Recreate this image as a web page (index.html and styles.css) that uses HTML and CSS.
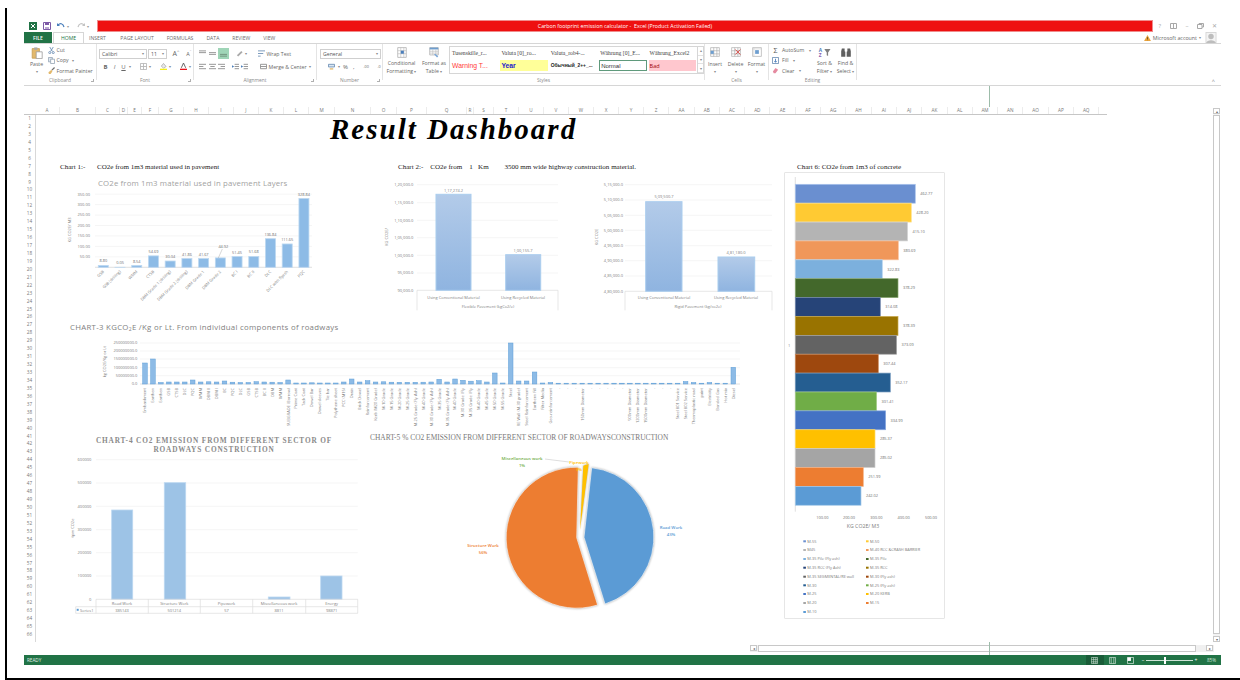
FILE: index.html
```html
<!DOCTYPE html>
<html lang="en">
<head>
<meta charset="utf-8">
<title>Carbon footprint emission calculator - Excel</title>
<link rel="stylesheet" href="styles.css">
</head>
<body>
<svg class="sprite" aria-hidden="true">
  <defs>
    <linearGradient id="barFade" x1="0" y1="0" x2="0" y2="1">
      <stop offset="0" stop-color="#b3cbe9"/>
      <stop offset="1" stop-color="#8fb4e0"/>
    </linearGradient>
    <symbol id="al-top" viewBox="0 0 8 8"><path d="M0 1h8M0 3h8" stroke="#8a8a8a" fill="none"/></symbol>
    <symbol id="al-mid" viewBox="0 0 8 8"><path d="M0 3h8M0 5h8" stroke="#8a8a8a" fill="none"/></symbol>
    <symbol id="al-bot" viewBox="0 0 8 8"><path d="M0 5h8M0 7h8" stroke="#6d8d78" fill="none"/></symbol>
    <symbol id="al-left" viewBox="0 0 8 8"><path d="M0 1.5h8M0 4h5M0 6.5h8" stroke="#8a8a8a" fill="none"/></symbol>
    <symbol id="al-center" viewBox="0 0 8 8"><path d="M0 1.5h8M1.5 4h5M0 6.5h8" stroke="#8a8a8a" fill="none"/></symbol>
    <symbol id="al-right" viewBox="0 0 8 8"><path d="M0 1.5h8M3 4h5M0 6.5h8" stroke="#8a8a8a" fill="none"/></symbol>
    <symbol id="indent" viewBox="0 0 8 8"><path d="M3 1.5h5M3 4h5M3 6.5h5" stroke="#8a8a8a" fill="none"/><path d="M2.5 4 0 2.5v3z" fill="#4a7ebb"/></symbol>
    <symbol id="table-blue" viewBox="0 0 16 18"><path d="M1 1h14v16H1z" fill="#fff" stroke="#9a9a9a"/><path d="M1 6h14M1 11h14M6 1v16M11 1v16" stroke="#b9b9b9"/><path d="M6 6h5v5H6z" fill="#4a7ebb"/></symbol>
  </defs>
</svg>

<div class="frame">
  <div class="window">

    <header class="titlebar">
      <div class="qat">
        <svg class="qat-ic" viewBox="0 0 8 8"><path d="M0 0h8v8H0z" fill="#217346"/><path d="M2 2l4 4M6 2 2 6" stroke="#fff"/></svg>
        <svg class="qat-ic" viewBox="0 0 8 8"><path d="M.5.5h7v7h-7z" fill="#fff" stroke="#7d5aa6"/><path d="M2 1h4v2H2z" fill="#7d5aa6"/><path d="M2 5h4v2H2z" fill="#b9a6d1"/></svg>
        <svg class="qat-ic" viewBox="0 0 8 8"><path d="M1 3c2-2 5-2 6 2" fill="none" stroke="#4a7ebb" stroke-width="1.2"/><path d="M0 1v3h3z" fill="#4a7ebb"/></svg>
        <span class="qat-caret">▾</span>
        <svg class="qat-ic" viewBox="0 0 8 8"><path d="M7 3C5 1 2 1 1 5" fill="none" stroke="#c4c4c4" stroke-width="1.2"/><path d="M8 1v3H5z" fill="#c4c4c4"/></svg>
        <span class="qat-caret">▾</span>
      </div>
      <div class="redbar">Carbon footprint emission calculator -&nbsp; Excel (Product Activation Failed)</div>
      <div class="winbtns">
        <span>?</span>
        <span><svg class="win-ic" viewBox="0 0 7 6"><path d="M.5.5h6v5h-6zM3.5.5v5" fill="none" stroke="#a8a8a8"/></svg></span>
        <span>–</span>
        <span><svg class="win-ic" viewBox="0 0 7 6"><path d="M.5 1.5h4.5v4H.5zM2 1V.5h4.5v3.5H5" fill="none" stroke="#a8a8a8"/></svg></span>
        <span>✕</span>
      </div>
    </header>

    <nav class="tabs">
      <span class="tab tab-file">FILE</span>
      <span class="tab tab-home">HOME</span>
      <span class="tab tab-insert">INSERT</span>
      <span class="tab">PAGE LAYOUT</span>
      <span class="tab">FORMULAS</span>
      <span class="tab">DATA</span>
      <span class="tab">REVIEW</span>
      <span class="tab">VIEW</span>
      <div class="account">
        <svg class="warn" viewBox="0 0 8 7"><path d="M4 0 8 7H0z" fill="#e8a33d"/><path d="M4 2.5v2.2M4 5.3v.7" stroke="#4a3a1a" stroke-width=".8"/></svg>
        <span>Microsoft account</span>
        <span class="caret">▾</span>
        <svg class="avatar" viewBox="0 0 12 12"><path d="M0 0h12v12H0z" fill="#d6d6d6"/><path d="M1 1h10v10H1z" fill="#f4f4f4"/><circle cx="6" cy="5" r="3" fill="#bdbdbd"/><path d="M1 12c0-4 10-4 10 0z" fill="#bdbdbd"/></svg>
      </div>
    </nav>

    <section class="ribbon">
      <div class="group g-clip">
        <div class="g-body clip-body">
          <div class="big-btn paste">
            <svg class="paste-ic" viewBox="0 0 14 15"><path d="M1 2h9v12H1z" fill="#e3b96c" stroke="#c59a4f"/><path d="M3.5 .5h4v3h-4z" fill="#a9a9a9"/><path d="M6 6h7.5v8.5H6z" fill="#fff" stroke="#9a9a9a"/></svg>
            <span>Paste</span>
            <span class="caret">▾</span>
          </div>
          <ul class="clip-list">
            <li><svg class="ic" viewBox="0 0 8 8"><path d="M2 0l3 5M6 0 3 5" stroke="#6d8fb5" fill="none"/><circle cx="2" cy="6.4" r="1.2" fill="none" stroke="#6d8fb5"/><circle cx="6" cy="6.4" r="1.2" fill="none" stroke="#6d8fb5"/></svg>Cut</li>
            <li><svg class="ic" viewBox="0 0 8 8"><path d="M.5.5h4.5v5H.5z" fill="#dfe8f2" stroke="#9aa9b8"/><path d="M3 2.5h4.5v5H3z" fill="#fff" stroke="#9aa9b8"/></svg>Copy <span class="caret">▾</span></li>
            <li><svg class="ic" viewBox="0 0 8 8"><path d="M4 3l3-3 1 1-3 3z" fill="#6f6f6f"/><path d="M.5 6 4 3l1 2-2 3H1z" fill="#e3b96c"/></svg>Format Painter</li>
          </ul>
        </div>
        <div class="g-label">Clipboard<i class="launcher"></i></div>
      </div>

      <div class="group g-font">
        <div class="g-body stack">
          <div class="tool-row">
            <span class="combo combo-font">Calibri<b class="caret">▾</b></span>
            <span class="combo combo-size">11<b class="caret">▾</b></span>
            <span class="glyph glyph-a">A<sup>^</sup></span>
            <span class="glyph glyph-a small-a">A<sup>ˇ</sup></span>
          </div>
          <div class="tool-row row-font">
            <b class="glyph">B</b><i class="glyph">I</i><u class="glyph">U</u><span class="caret">▾</span>
            <svg class="ic ic-gap" viewBox="0 0 8 8"><path d="M.5.5h7v7h-7zM4 .5v7M.5 4h7" fill="none" stroke="#b5b5b5"/></svg><span class="caret">▾</span>
            <svg class="ic ic-gap" viewBox="0 0 8 8"><path d="M4 .5 7 4 4 6 1.5 3.5z" fill="#e9e9e9" stroke="#8a8a8a" stroke-width=".6"/><path d="M0 6.5h8V8H0z" fill="#f4ef1a"/></svg><span class="caret">▾</span>
            <svg class="ic ic-gap" viewBox="0 0 8 8"><path d="M1.5 5.5 4 0l2.5 5.5" fill="none" stroke="#555"/><path d="M0 6.5h8V8H0z" fill="#e8141c"/></svg><span class="caret">▾</span>
          </div>
        </div>
        <div class="g-label">Font<i class="launcher"></i></div>
      </div>

      <div class="group g-align">
        <div class="g-body stack">
          <div class="tool-row">
            <svg class="ic"><use href="#al-top"/></svg>
            <svg class="ic"><use href="#al-mid"/></svg>
            <span class="pressed"><svg class="ic"><use href="#al-bot"/></svg></span>
            <svg class="ic ic-wide" viewBox="0 0 8 8"><path d="M1 6 6 1l1.5 1.5-5 5z" fill="#a9a9a9"/></svg><span class="caret">▾</span>
            <span class="with-icon wrap"><svg class="ic" viewBox="0 0 8 8"><path d="M0 1h8M0 4h6M0 7h3" stroke="#6d8fb5" fill="none"/></svg>Wrap Text</span>
          </div>
          <div class="tool-row">
            <svg class="ic"><use href="#al-left"/></svg>
            <svg class="ic"><use href="#al-center"/></svg>
            <svg class="ic"><use href="#al-right"/></svg>
            <svg class="ic ic-wide"><use href="#indent"/></svg>
            <svg class="ic"><use href="#indent"/></svg>
            <span class="with-icon merge"><svg class="ic" viewBox="0 0 8 8"><path d="M.5 1.5h7v5h-7zM.5 4h7" fill="none" stroke="#8a8a8a"/></svg>Merge &amp; Center <span class="caret">▾</span></span>
          </div>
        </div>
        <div class="g-label">Alignment<i class="launcher"></i></div>
      </div>

      <div class="group g-num">
        <div class="g-body stack">
          <div class="tool-row"><span class="combo combo-num">General<b class="caret">▾</b></span></div>
          <div class="tool-row row-num">
            <svg class="ic" viewBox="0 0 8 8"><path d="M.5 1.5h7v3h-7z" fill="#dbe7f3" stroke="#6d8fb5"/><path d="M2 6h4v1.5H2z" fill="#e3b96c"/></svg><span class="caret">▾</span>
            <span class="glyph">%</span><span class="glyph">,</span>
            <span class="glyph tiny">.00</span><span class="glyph tiny">.0</span>
          </div>
        </div>
        <div class="g-label">Number<i class="launcher"></i></div>
      </div>

      <div class="group g-styles">
        <div class="g-body styles-body">
          <div class="big-btn cond">
            <svg class="big-ic"><use href="#table-blue"/></svg>
            <span>Conditional</span>
            <span>Formatting <b class="caret">▾</b></span>
          </div>
          <div class="big-btn tbl">
            <svg class="big-ic" viewBox="0 0 16 18"><path d="M1 1h14v12H1z" fill="#fff" stroke="#9a9a9a"/><path d="M1 1h14v3H1z" fill="#6d9ecf"/><path d="M1 7h14M1 10h14M6 4v9M11 4v9" stroke="#bcbcbc"/><path d="M8 12l5 5 2-2-5-4z" fill="#7aa6d6"/></svg>
            <span>Format as</span>
            <span>Table <b class="caret">▾</b></span>
          </div>
          <div class="gallery">
            <div class="gal-cells">
              <span class="gal-name">Tusenskille_r...</span>
              <span class="gal-name">Valuta [0]_ro...</span>
              <span class="gal-name">Valuta_rob4-...</span>
              <span class="gal-name">Währung [0]_E...</span>
              <span class="gal-name">Währung_Excel2</span>
              <span class="gal-swatch warn-text">Warning T...</span>
              <span class="gal-swatch year">Year</span>
              <span class="gal-swatch ob">Обычный_2++_...</span>
              <span class="gal-swatch normal">Normal</span>
              <span class="gal-swatch bad">Bad</span>
            </div>
            <div class="gal-arrows"><span>▴</span><span>▾</span><span>▾</span></div>
          </div>
        </div>
        <div class="g-label">Styles</div>
      </div>

      <div class="group g-cells">
        <div class="g-body cells-body">
          <div class="big-btn">
            <svg class="big-ic narrow" viewBox="0 0 16 16"><path d="M1 1h14v14H1zM1 6h14M1 11h14M6 1v14M11 1v14" fill="#fff" stroke="#a5a5a5"/><path d="M1 6h5v5H1z" fill="#6d9ecf"/></svg>
            <span>Insert</span><span class="caret">▾</span>
          </div>
          <div class="big-btn">
            <svg class="big-ic narrow" viewBox="0 0 16 16"><path d="M1 1h14v14H1zM1 6h14M1 11h14M6 1v14M11 1v14" fill="#fff" stroke="#a5a5a5"/><path d="M7 4l8 8M15 4l-8 8" stroke="#d9534f" stroke-width="1.6"/></svg>
            <span>Delete</span><span class="caret">▾</span>
          </div>
          <div class="big-btn">
            <svg class="big-ic narrow" viewBox="0 0 16 16"><path d="M1 1h14v14H1z" fill="#fff" stroke="#a5a5a5"/><path d="M5 5h6v6H5z" fill="#6d9ecf"/><path d="M1 3h14M3 1v14" stroke="#cfcfcf"/></svg>
            <span>Format</span><span class="caret">▾</span>
          </div>
        </div>
        <div class="g-label">Cells</div>
      </div>

      <div class="group g-edit">
        <div class="g-body edit-body">
          <ul class="clip-list edit-list">
            <li><span class="sigma">Σ</span>AutoSum <span class="caret">▾</span></li>
            <li><svg class="ic" viewBox="0 0 8 8"><path d="M.5.5h7v7h-7z" fill="#fff" stroke="#6d8fb5"/><path d="M4 2v4M2.5 4.5 4 6l1.500-1.500" stroke="#4a7ebb" fill="none"/></svg>Fill <span class="caret">▾</span></li>
            <li><svg class="ic" viewBox="0 0 8 8"><path d="M1 5l3-4 3 2-3 4H2z" fill="#e58aa0"/></svg>Clear <span class="caret">▾</span></li>
          </ul>
          <div class="big-btn">
            <svg class="big-ic" viewBox="0 0 18 16"><text class="sort-a" x="0" y="7">A</text><text class="sort-z" x="0" y="15">Z</text><path d="M8 3h9l-3.500 5v5l-2-1V8z" fill="#7f7f7f"/></svg>
            <span>Sort &amp;</span>
            <span>Filter <b class="caret">▾</b></span>
          </div>
          <div class="big-btn">
            <svg class="big-ic" viewBox="0 0 16 16"><path d="M2 2h4v4l1 1v7H1V6zM10 2h4l1 4 0 8H9V7l1-1z" fill="#5f5f5f"/></svg>
            <span>Find &amp;</span>
            <span>Select <b class="caret">▾</b></span>
          </div>
        </div>
        <div class="g-label">Editing</div>
      </div>

      <div class="ribbon-end"><span class="collapse">^</span></div>
    </section>

    <div class="formula-gap"><i class="split-mark"></i></div>

    <section class="sheet">
      <div class="sheet-main">
        <div class="col-heads">
          <span class="corner"></span>
          <div class="col-grid" id="colGrid"></div>
        </div>
        <div class="sheet-body">
          <div class="row-heads" id="rowHeads"></div>
          <main class="dash">
            <div class="dash-left">
              <h1 class="dash-title">Result Dashboard</h1>

              <div class="dash-row row-one">
                <figure class="chart chart-one">
                  <figcaption class="cap"><span class="cap-lead">Chart 1:-</span>CO2e from 1m3 material used in pavement</figcaption>
                  <svg class="c1" id="chartOne" viewBox="60 172 320 150">
                    <text class="ct-gray" x="98" y="185.500">CO2e from 1m3 material used in pavement Layers</text>
                    <text class="tk" transform="rotate(-90 71 230)" x="71" y="230" text-anchor="middle">KG CO2E/ M3</text>
                  </svg>
                </figure>
                <figure class="chart chart-two">
                  <figcaption class="cap cap-two">Chart 2:-    CO2e from    1   Km         3500 mm wide highway construction material.</figcaption>
                  <div class="two-plots">
                    <svg class="c2a" viewBox="380 172 210 150">
                      <g class="grid">
                        <path d="M417 184.700h141M417 202.700h141M417 220.300h141M417 237.700h141M417 255.300h141M417 273h141"/>
                      </g>
                      <path class="frame-line" d="M417 290.300h141M417 290.300v20M558 290.300v20"/>
                      <rect class="gbar" x="436" y="194.300" width="35" height="96"/>
                      <rect class="gbar" x="505.700" y="254.700" width="35" height="35.600"/>
                      <g class="tk tk-end">
                        <text x="413.300" y="186">1,20,000.0</text><text x="413.300" y="204">1,15,000.0</text><text x="413.300" y="221.600">1,10,000.0</text><text x="413.300" y="239">1,05,000.0</text><text x="413.300" y="256.600">1,00,000.0</text><text x="413.300" y="274.300">95,000.0</text><text x="413.300" y="291.600">90,000.0</text>
                      </g>
                      <g class="tk tk-mid">
                        <text x="453.500" y="191.500">1,17,274.2</text>
                        <text x="523" y="251.500">1,00,155.7</text>
                        <text x="453.500" y="298.500">Using Conventional Material</text>
                        <text x="523" y="298.500">Using Recycled Material</text>
                        <text x="488" y="307.500">Flexible Pavement (kgCo2/e)</text>
                        <text transform="rotate(-90 388 237)" x="388" y="237">KG CO2E/</text>
                      </g>
                    </svg>
                    <svg class="c2b" viewBox="590 172 194 150">
                      <g class="grid">
                        <path d="M625 184.700h147M625 200h147M625 215.300h147M625 230.300h147M625 245.700h147M625 260.700h147M625 276h147"/>
                      </g>
                      <path class="frame-line" d="M625 291.300h147M625 291.300v19M772 291.300v19"/>
                      <rect class="gbar" x="645.700" y="201.700" width="36.300" height="89.600"/>
                      <rect class="gbar" x="718" y="257" width="36.700" height="34.300"/>
                      <g class="tk tk-end">
                        <text x="623" y="186">5,15,000.0</text><text x="623" y="201.300">5,10,000.0</text><text x="623" y="216.600">5,05,000.0</text><text x="623" y="231.600">5,00,000.0</text><text x="623" y="247">4,95,000.0</text><text x="623" y="262">4,90,000.0</text><text x="623" y="277.300">4,85,000.0</text><text x="623" y="292.600">4,80,000.0</text>
                      </g>
                      <g class="tk tk-mid">
                        <text x="664" y="198.300">5,09,500.7</text>
                        <text x="736" y="254">4,81,180.0</text>
                        <text x="664" y="298.500">Using Conventional Material</text>
                        <text x="736" y="298.500">Using Recycled Material</text>
                        <text x="698" y="307.500">Rigid Pavement  (kg/co2e)</text>
                        <text transform="rotate(-90 598 237)" x="598" y="237">KG CO2E</text>
                      </g>
                    </svg>
                  </div>
                </figure>
              </div>

              <figure class="chart">
                <svg class="c3" id="chartThree" viewBox="60 322 724 110">
                  <text class="ct-dark" x="70" y="329.500">CHART-3 KGCO<tspan class="sub" dy="1.500">2</tspan><tspan dy="-1.500">E /Kg or Lt. From individual components of roadways</tspan></text>
                </svg>
              </figure>

              <div class="dash-row">
                <figure class="chart">
                  <svg class="c4" viewBox="60 432 305 193">
                    <text class="ct-serif ct-spaced" x="214" y="442.500">CHART-4 CO2 EMISSION FROM DIFFERENT SECTOR OF</text>
                    <text class="ct-serif ct-spaced" x="214" y="451.500">ROADWAYS CONSTRUCTION</text>
                    <path class="grid-line" d="M96 459.700h261.700M96 483h261.700M96 506.300h261.700M96 529.700h261.700M96 552.700h261.700M96 576h261.700"/>
                    <rect class="lbar" x="111.700" y="510" width="21" height="89.300"/>
                    <rect class="lbar" x="164.300" y="482.700" width="21.400" height="116.600"/>
                    <rect class="lbar" x="268.300" y="597" width="21.700" height="2.300"/>
                    <rect class="lbar" x="320.700" y="576" width="21.300" height="23.300"/>
                    <path class="frame-line" d="M96 599.300h261.700v14H75.700v-6.600h282M96 599.300v14M148.300 599.300v14M200.300 599.300v14M252.700 599.300v14M305.700 599.300v14"/>
                    <g class="tk tk-end">
                      <text x="91.300" y="461">600000</text><text x="91.300" y="484.300">500000</text><text x="91.300" y="507.600">400000</text><text x="91.300" y="531">300000</text><text x="91.300" y="554">200000</text><text x="91.300" y="577.300">100000</text><text x="91.300" y="600.600">0</text>
                    </g>
                    <g class="tk tk-mid">
                      <text x="122" y="604.600">Road Work</text><text x="174.300" y="604.600">Structure Work</text><text x="226.500" y="604.600">Pipework</text><text x="279" y="604.600">Miscellaneous work</text><text x="331.700" y="604.600">Energy</text>
                      <text x="122" y="611.500">385143</text><text x="174.300" y="611.500">501214</text><text x="226.500" y="611.500">57</text><text x="279" y="611.500">8811</text><text x="331.700" y="611.500">98871</text>
                      <text transform="rotate(-90 74 528)" x="74" y="528">tpm CO2e</text>
                    </g>
                    <rect class="swatch-blue" x="76.700" y="608.800" width="2" height="2"/>
                    <text class="tk" x="80" y="611.500">Series1</text>
                  </svg>
                </figure>
                <figure class="chart">
                  <svg class="c5" viewBox="365 432 419 193">
                    <text class="ct-serif-wide" x="370" y="440">CHART-5 % CO2 EMISSION FROM DIFFERENT SECTOR OF ROADWAYSCONSTRUCTION</text>
                    <g class="pie">
                      <path class="p-blue" d="M584 537.300 591.700 467.700A70 70 0 0 1 605 604Z"/>
                      <path class="p-orange" d="M576.700 537.700 597.600 605A70.500 70.500 0 1 1 578.300 467.200Z"/>
                      <path class="p-yellow" d="M580 530 583.300 465.700A65 65 0 0 1 588.700 464Z"/>
                    </g>
                    <path class="leader" d="M545 459l24 3"/>
                    <g class="pie-labels">
                      <text class="lb-green" x="522" y="459.500">Miscellaneous work</text>
                      <text class="lb-green" x="522" y="466.500">1%</text>
                      <text class="lb-yellow" x="579" y="463.500">Pipework</text>
                      <text class="lb-yellow" x="579" y="470.500">0%</text>
                      <text class="lb-blue" x="671" y="528.500">Road Work</text>
                      <text class="lb-blue" x="671" y="535.500">43%</text>
                      <text class="lb-orange" x="483" y="546.500">Structure Work</text>
                      <text class="lb-orange" x="483" y="553.500">56%</text>
                    </g>
                  </svg>
                </figure>
              </div>
            </div>

            <div class="dash-right">
              <figcaption class="cap cap-six">Chart 6: CO2e from 1m3 of concrete</figcaption>
              <figure class="chart box-six">
                <svg class="c6" id="chartSix" viewBox="785 173 160 446"></svg>
              </figure>
            </div>
          </main>
        </div>
      </div>
      <aside class="vscroll">
        <span class="sb-btn">▴</span>
        <span class="sb-thumb"></span>
        <span class="sb-btn">▾</span>
      </aside>
    </section>

    <div class="hscroll-row">
      <div class="hscroll">
        <span class="sb-btn">◂</span>
        <span class="hb-thumb"></span>
        <span class="sb-btn sb-right">▸</span>
      </div>
    </div>

    <footer class="status">
      <span class="ready">READY</span>
      <div class="status-right">
        <span class="view-btn view-on"><svg class="ic" viewBox="0 0 8 8"><path d="M.5.5h7v7h-7zM3 .5v7M5.500 .5v7M.5 3h7M.5 5.500h7" fill="none" stroke="#cfe3d6" stroke-width=".7"/></svg></span>
        <span class="view-btn"><svg class="ic" viewBox="0 0 8 8"><path d="M.5.5h7v7h-7zM2.500 .5v7M5.500 .5v7" fill="none" stroke="#cfe3d6" stroke-width=".8"/></svg></span>
        <span class="view-btn"><svg class="ic" viewBox="0 0 8 8"><path d="M.5.5h7v7h-7z" fill="none" stroke="#e7f1ea" stroke-width=".8"/><path d="M.5.5h4v4h-4z" fill="#fff"/></svg></span>
        <span class="zoom-sign">–</span>
        <span class="zoom-track"><i class="zoom-thumb"></i></span>
        <span class="zoom-sign">+</span>
        <span class="zoom-val">85%</span>
      </div>
    </footer>
  </div>
</div>
<script src="charts.js"></script>
</body>
</html>
```

FILE: styles.css
```css
* { box-sizing: border-box; }

html, body { margin: 0; padding: 0; }

body {
  width: 1240px;
  height: 680px;
  padding-top: 8px;
  overflow: hidden;
  background: #fff;
  font-family: "Open Sans", "Liberation Sans", sans-serif;
  font-size: 5.2px;
  color: #666;
}

.sprite { display: block; width: 0; height: 0; overflow: hidden; }

.frame {
  width: 1235px;
  height: 672px;
  margin-left: 5px;
  border-left: 2px solid #000;
  border-bottom: 2px solid #000;
  padding: 12px 0 0 17px;
}

.window { width: 1197px; }

/* Title row */
.titlebar { display: flex; height: 12px; align-items: stretch; }

.qat {
  width: 73px;
  display: flex;
  align-items: center;
  padding-left: 5px;
  gap: 6px;
}
.qat-ic { width: 8px; height: 8px; }
.qat-caret { font-size: 4px; color: #9a9a9a; margin-left: -4px; margin-right: 2px; }

.redbar {
  width: 1056px;
  background: #ee1010;
  border: 1px solid #f08c8c;
  color: #fff;
  display: flex;
  align-items: center;
  justify-content: center;
  font-size: 5.3px;
}

.winbtns { flex: 1; display: flex; align-items: center; color: #a8a8a8; font-size: 6px; }
.winbtns span { width: 13.6px; text-align: center; display: flex; justify-content: center; }
.win-ic { width: 7px; height: 6px; }

/* Tabs */
.tabs { display: flex; height: 11px; align-items: stretch; position: relative; }
.tab {
  display: flex;
  align-items: center;
  padding: 0 6.500px;
  font-size: 5.1px;
  color: #6b6b6b;
}
.tab-file {
  width: 28px;
  padding: 0;
  justify-content: center;
  background: #217346;
  color: #fff;
  font-weight: 600;
  margin-right: 1px;
}
.tab-home {
  width: 31px;
  justify-content: center;
  padding: 0;
  color: #217346;
  border: 1px solid #d6d6d6;
  border-bottom: 0;
  background: #fff;
  margin-right: 0;
}
.tab-insert { padding-left: 5px; padding-right: 8px; }
.account {
  margin-left: auto;
  margin-right: 4px;
  display: flex;
  align-items: center;
  gap: 2px;
  font-size: 5.300px;
}
.warn { width: 7px; height: 6px; }
.avatar { width: 12px; height: 11px; margin-left: 2px; }
.caret { font-size: 3.500px; color: #8a8a8a; font-weight: 400; }

/* Ribbon */
.ribbon {
  display: flex;
  height: 43px;
  border-top: 1px solid #d6d6d6;
  border-bottom: 1px solid #d6d6d6;
}
.group {
  display: flex;
  flex-direction: column;
  border-right: 1px solid #e4e4e4;
  margin-bottom: 6px;
  height: 36px;
  flex: none;
}
.g-clip { width: 73px; }
.g-font { width: 97px; }
.g-align { width: 123px; }
.g-num { width: 66px; }
.g-styles { width: 322px; }
.g-cells { width: 64px; }
.g-edit { width: 88px; }

.g-body { height: 32px; flex: none; }
.g-label {
  height: 8px;
  margin-bottom: -6px;
  font-size: 4.900px;
  line-height: 8px;
  color: #8a8a8a;
  text-align: center;
  position: relative;
}
.launcher {
  position: absolute;
  right: 2px;
  top: 3px;
  width: 3px;
  height: 3px;
  border-right: 1px solid #b0b0b0;
  border-bottom: 1px solid #b0b0b0;
}

.stack { display: flex; flex-direction: column; padding: 4px 0 0 2px; gap: 2px; }
.tool-row { display: flex; align-items: center; height: 11px; gap: 2.500px; }

.ic { width: 7px; height: 7px; flex: none; }
.ic-gap { margin-left: 7px; }
.ic-wide { margin-left: 4px; }
.glyph { font-size: 6px; color: #666; width: 7px; text-align: center; }
.glyph-a { font-size: 7px; width: 9px; margin-left: 2px; }
.small-a { font-size: 5.500px; }
.glyph-a sup { font-size: 4px; line-height: 0; }
.row-font { padding-left: 3px; gap: 2px; }
.tiny { font-size: 3.800px; margin-left: 4px; width: 8px; }
.row-num { padding-left: 6px; gap: 3px; }

.combo {
  display: flex;
  align-items: center;
  justify-content: space-between;
  height: 10px;
  padding: 0 2px;
  border: 1px solid #cfcfcf;
  font-size: 5.200px;
  color: #555;
}
.combo-font { width: 51px; margin-right: -1.500px; }
.combo-size { width: 20px; }
.combo-num { width: 61px; margin-left: 1px; }

.pressed {
  width: 11px;
  height: 11px;
  background: #9fd5b7;
  display: flex;
  align-items: center;
  justify-content: center;
}
.tool-row > .ic:first-child { margin-left: 3px; }
.with-icon { display: flex; align-items: center; gap: 2px; }
.wrap { margin-left: 8px; }
.merge { margin-left: 9px; }

/* Clipboard */
.clip-body { display: flex; }
.big-btn {
  display: flex;
  flex-direction: column;
  align-items: center;
  line-height: 8px;
  padding-top: 3px;
  flex: none;
  color: #666;
}
.paste { width: 24px; padding-left: 1px; }
.paste-ic { width: 14px; height: 15px; margin-bottom: 1px; }
.big-ic { width: 16px; height: 18px; margin-bottom: 1px; }
.big-ic.narrow { height: 16px; margin-bottom: 3px; }

.clip-list {
  list-style: none;
  margin: 0;
  padding: 1px 0 0;
  display: flex;
  flex-direction: column;
  gap: 0;
}
.clip-list li { display: flex; align-items: center; gap: 1.500px; height: 11px; white-space: pre; }

/* Styles gallery */
.styles-body { display: flex; padding-left: 2px; }
.cond { width: 33px; }
.tbl { width: 26px; margin-left: 3px; }
.gallery {
  width: 257px;
  height: 28px;
  margin: 2px 0 0 2px;
  border: 1px solid #d6d6d6;
  display: flex;
}
.gal-cells {
  flex: 1;
  display: grid;
  grid-template-columns: repeat(5, 1fr);
  grid-template-rows: 12px 12px;
  column-gap: 2px;
  padding: 1px 1px 0 1px;
}
.gal-name {
  font-family: "Liberation Serif", serif;
  font-size: 5.700px;
  color: #444;
  padding-left: 1px;
  line-height: 11px;
  white-space: nowrap;
  overflow: hidden;
}
.gal-swatch {
  display: flex;
  align-items: center;
  padding-left: 1px;
  height: 11px;
  white-space: nowrap;
  overflow: hidden;
}
.warn-text { color: #ff3a3a; font-size: 6.800px; font-family: "Liberation Sans", sans-serif; }
.year { background: #ffff99; color: #2222cc; font-weight: 700; font-size: 6.800px; font-family: "Liberation Sans", sans-serif; }
.ob { color: #222; font-family: "Liberation Sans", sans-serif; font-size: 4.900px; font-weight: 700; }
.normal { border: 1px solid #5f9a7c; color: #333; font-size: 6px; font-family: "Liberation Sans", sans-serif; }
.bad { background: #ffc7ce; color: #9c0006; font-size: 5.500px; }
.gal-arrows {
  width: 6px;
  display: flex;
  flex-direction: column;
  border-left: 1px solid #d6d6d6;
  font-size: 3.500px;
  color: #888;
}
.gal-arrows span {
  flex: 1;
  display: flex;
  align-items: center;
  justify-content: center;
  border-bottom: 1px solid #e2e2e2;
}

/* Cells and editing */
.cells-body { display: flex; padding-left: 0; }
.cells-body .big-btn { width: 21px; }
.cells-body .big-btn:first-child { width: 20px; }
.edit-body { display: flex; padding-left: 3px; }
.edit-list { width: 45px; padding-top: 1px; }
.edit-list li { gap: 3px; }
.sigma { font-size: 7px; color: #555; width: 7px; text-align: center; }
.edit-body .big-btn { width: 21px; }
.sort-a { font: 700 7px "Open Sans", sans-serif; fill: #4a7ebb; }
.sort-z { font: 700 7px "Open Sans", sans-serif; fill: #8a5fb0; }

.ribbon-end { flex: 1; display: flex; justify-content: flex-end; align-items: flex-end; padding: 0 6px 0 0; }
.collapse { font-size: 5.500px; color: #808080; line-height: 7px; }

/* Empty band under the ribbon */
.formula-gap { height: 21px; padding-left: 965px; }
.split-mark { display: block; width: 1px; height: 21px; background: #9dbcaa; }

/* Sheet */
.sheet { display: flex; height: 535px; }
.sheet-main { width: 1189px; display: flex; flex-direction: column; }

.col-heads {
  display: flex;
  width: 1083px;
  height: 8px;
  border-bottom: 1px solid #c6c6c6;
}
.corner { width: 11px; flex: none; }
.col-grid {
  flex: 1;
  display: grid;
  grid-template-columns:
    25px 36px 24px 8px 14px 17px 25px 25px 25px 25px 25px 25px 26px 36px 26px 30px 40px 7px 20px
    25px 25px 25px 25px 25px 25px repeat(18, 25.300px);
}
.col-grid span {
  font-size: 4.700px;
  line-height: 7px;
  text-align: center;
  color: #777;
  border-right: 1px solid #ececec;
}

.sheet-body { display: flex; flex: 1; }
.row-heads { width: 12px; border-right: 1px solid #d8d8d8; flex: none; }
.row-heads span {
  display: block;
  height: 7.950px;
  font-size: 4.700px;
  line-height: 7.950px;
  text-align: center;
  color: #777;
}

.dash { display: flex; padding-left: 24px; }
.dash-left { width: 724px; flex: none; }
.dash-right { width: 162px; padding-top: 47px; flex: none; }

.dash-title {
  height: 47px;
  margin: 0;
  padding-left: 270px;
  font-family: "Liberation Serif", serif;
  font-weight: 700;
  font-style: italic;
  font-size: 29px;
  letter-spacing: 2px;
  line-height: 29px;
  color: #000;
  white-space: nowrap;
}

.dash-row { display: flex; }
.row-one { height: 160px; }
.chart { margin: 0; display: block; }
.chart svg { display: block; }

.cap {
  height: 10px;
  font-family: "Liberation Serif", serif;
  font-size: 7.050px;
  line-height: 10px;
  color: #222;
  white-space: pre;
}
.cap-lead { display: inline-block; width: 37px; }
.cap-two { padding-left: 18px; }
.cap-six { padding-left: 13px; }

.two-plots { display: flex; }
.c1 { width: 320px; height: 150px; }
.c2a { width: 210px; height: 150px; }
.c2b { width: 194px; height: 150px; }
.c3 { width: 724px; height: 110px; }
.c4 { width: 305px; height: 193px; }
.c5 { width: 419px; height: 193px; }
.c6 { width: 160px; height: 446px; }

.box-six { width: 161px; height: 447px; border: 1px solid #e6e6e6; border-radius: 1px; }

/* Chart text */
.ct-gray { font-size: 7.800px; fill: #a2a2a2; letter-spacing: .15px; }
.ct-dark { font-size: 7.800px; fill: #7f7f7f; letter-spacing: .3px; }
.sub { font-size: 5px; }
.ct-serif { font-family: "Liberation Serif", serif; font-weight: 700; font-size: 7.300px; fill: #8a8a8a; text-anchor: middle; }
.ct-spaced { letter-spacing: .85px; }
.ct-serif-wide { font-family: "Liberation Serif", serif; font-size: 7.450px; fill: #7a7a7a; }

.tk, .tk text { font-size: 4px; fill: #808080; }
.tk-end text { text-anchor: end; }
.tk-mid text { text-anchor: middle; }
.tk-small { font-size: 3.800px; fill: #808080; }
.tk-val { font-size: 3.900px; fill: #6e6e6e; text-anchor: middle; }
.tk-cat { font-size: 4px; fill: #808080; text-anchor: end; }

.grid path, .grid-line { stroke: #f1f1f1; stroke-width: .7; fill: none; }
.frame-line { stroke: #dcdcdc; stroke-width: .7; fill: none; }
.axis-line { stroke: #d8d8d8; stroke-width: .8; fill: none; }

.gbar { fill: url(#barFade); stroke: #aacdee; stroke-width: 1; }
.lbar { fill: #9dc3e6; stroke: #bcd8f1; stroke-width: .8; }
.sbar { fill: #8dbbe6; stroke: #bcd8f1; stroke-width: .8; }
.tbar { fill: #8dbbe6; stroke: #5f9fd8; stroke-width: .5; }
.swatch-blue { fill: #5b9bd5; }
.leader-thin { stroke: #9a9a9a; stroke-width: .4; fill: none; }

/* Pie */
.pie { filter: drop-shadow(0 0 1px #a8a8a8); }
.p-blue { fill: #5b9bd5; stroke: #fff; stroke-width: .6; }
.p-orange { fill: #ed7d31; stroke: #fff; stroke-width: .6; }
.p-yellow { fill: #ffc000; }
.leader { stroke: #bdbdbd; stroke-width: .5; fill: none; }
.pie-labels text { font-size: 4.300px; font-weight: 600; text-anchor: middle; }
.lb-green { fill: #70ad47; }
.lb-yellow { fill: #ffc000; }
.lb-blue { fill: #5b9bd5; }
.lb-orange { fill: #ed7d31; }

.axis-title { font-size: 5.200px; fill: #808080; text-anchor: middle; }
.legend-text { font-size: 3.900px; fill: #7a7a7a; }

/* Scrollbars */
.vscroll {
  width: 7px;
  margin-top: 1px;
  display: flex;
  flex-direction: column;
  background: #f3f3f3;
  height: 534px;
  flex: none;
}
.sb-btn {
  display: flex;
  align-items: center;
  justify-content: center;
  width: 7px;
  height: 6px;
  flex: none;
  font-size: 4px;
  color: #666;
  background: #fff;
  border: 1px solid #c8c8c8;
}
.sb-thumb { height: 519px; margin-top: 1px; border: 1px solid #c8c8c8; background: #fff; }
.vscroll .sb-btn:last-child { margin-top: auto; }

.hscroll-row { height: 13px; padding: 3px 0 0 726px; position: relative; }
.hscroll-row::before {
  content: "";
  position: absolute;
  left: 965px;
  top: 0;
  width: 1px;
  height: 13px;
  background: #9dbcaa;
}
.hscroll { width: 464px; height: 7px; display: flex; background: #f0f0f0; }
.hb-thumb { width: 438px; border: 1px solid #c8c8c8; background: #fff; margin-left: 1px; }
.sb-right { margin-left: auto; margin-right: 1px; }

/* Status bar */
.status {
  height: 10px;
  background: #217346;
  color: #e3efe8;
  display: flex;
  align-items: center;
  padding-left: 3px;
  font-size: 4.600px;
}
.status-right { margin-left: auto; display: flex; align-items: center; height: 100%; padding-right: 5px; }
.view-btn { width: 18px; height: 100%; display: flex; align-items: center; justify-content: center; }
.view-on { background: #1a5c38; }
.zoom-sign { width: 6px; text-align: center; font-size: 5px; color: #fff; }
.zoom-track { width: 47px; height: 1px; background: #cfe3d6; position: relative; }
.zoom-thumb { position: absolute; left: 18px; top: -3px; width: 2px; height: 7px; background: #fff; }
.zoom-val { margin-left: 8px; color: #d7e8dd; }
```

FILE: charts.js
```js
// Builds the sheet headers and the data-heavy charts on the dashboard.
const SVG_NS = "http://www.w3.org/2000/svg";

function el(parent, name, attrs, text) {
  const node = document.createElementNS(SVG_NS, name);
  for (const key in attrs) node.setAttribute(key, attrs[key]);
  if (text !== undefined) node.textContent = text;
  parent.appendChild(node);
  return node;
}

// Sheet headers
const rowHeads = document.getElementById("rowHeads");
for (let r = 1; r <= 66; r++) {
  const s = document.createElement("span");
  s.textContent = r;
  rowHeads.appendChild(s);
}

const colGrid = document.getElementById("colGrid");
const letters = "ABCDEFGHIJKLMNOPQRSTUVWXYZ".split("");
const cols = letters.concat("A,B,C,D,E,F,G,H,I,J,K,L,M,N,O,P,Q".split(",").map(c => "A" + c));
cols.forEach(name => {
  const s = document.createElement("span");
  s.textContent = name;
  colGrid.appendChild(s);
});

// Chart 1: material in pavement layers
(function () {
  const svg = document.getElementById("chartOne");
  const base = 267.3, perUnit = 0.209;
  [350, 300, 250, 200, 150, 100, 50].forEach(v => {
    const y = base - v * perUnit;
    el(svg, "path", { class: "grid-line", d: `M95 ${y}h217` });
    el(svg, "text", { class: "tk", x: 90, y: y + 1.4, "text-anchor": "end" }, v.toFixed(2));
  });
  el(svg, "path", { class: "axis-line", d: `M95 ${base}h217` });
  const data = [
    ["GSB", 8.80], ["GSB (drilling)", 0.05], ["WMM", 8.54], ["CTSB", 54.69],
    ["DBM Grade 1 (drilling)", 30.04], ["DBM Grade 2 (drilling)", 41.86], ["DBM Grade 1", 41.67],
    ["DBM Grade  2", 44.92], ["BC I", 51.45], ["BC II", 51.68], ["DLC", 136.84],
    ["DLC with flyash", 111.65], ["PQC", 328.84]
  ];
  data.forEach(([name, v], i) => {
    const cx = 103.3 + i * 16.72;
    const top = base - v * perUnit;
    el(svg, "rect", { class: "sbar", x: cx - 5, y: top, width: 10, height: v * perUnit });
    if (i === 7) {
      el(svg, "text", { class: "tk-val", x: cx + 3, y: 248 }, v.toFixed(2));
      el(svg, "path", { class: "leader-thin", d: `M${cx + 2} 249L${cx - 2} ${top}` });
    } else {
      el(svg, "text", { class: "tk-val", x: cx, y: top - 3 }, v.toFixed(2));
    }
    const lx = cx + 1, ly = 272;
    el(svg, "text", { class: "tk-cat", x: lx, y: ly, transform: `rotate(-45 ${lx} ${ly})` }, name);
  });
})();

// Chart 3: individual components of roadways
(function () {
  const svg = document.getElementById("chartThree");
  const ticks = [[343, "250000000.0"], [351, "200000000.0"], [359, "150000000.0"], [367.7, "100000000.0"], [375.7, "50000000.0"], [383.7, "0.0"]];
  ticks.forEach(([y, t]) => {
    if (y < 383) el(svg, "path", { class: "grid-line", d: `M140 ${y}h600` });
    el(svg, "text", { class: "tk", x: 137.3, y: y + 1.4, "text-anchor": "end" }, t);
  });
  el(svg, "path", { class: "axis-line", d: "M140 384h600" });
  el(svg, "text", { class: "tk", x: 106, y: 361.7, "text-anchor": "middle", transform: "rotate(-90 106 361.7)" }, "kg CO2E/Kg or Lt");

  const names = [
    "Embankment", "Earthen", "Earthen", "GSB", "CTSB", "DLC", "PQC", "WMM", "DBM II", "DBM I", "BC", "PQC", "DLC", "GSB", "CTSB",
    "BC II", "DBM", "WMM", "SUBGRADE (Borrow)", "Prime Coat", "Tack Coat", "Dowel Bar", "Dowel sleeves", "Tie bar",
    "Polythene sheet", "PCC (M15)", "Drain", "Brick Dowel", "Reinforcement", "Kerb (M20 Grade)", "M-10 Grade", "M-15 Grade",
    "M-20 Grade", "M-25 Grade", "M-25 Grade (Fly Ash)", "M-40 Grade", "M-30 Grade (Fly Ash)", "M-35 Grade", "M-35 Grade (Fly Ash)",
    "M-40 Grade", "M-30 Grade (Fly", "M-35 Grade (Fly", "M-40 Grade", "M-45 Grade", "M-50 Grade", "M-55 Grade", "Steel",
    "RE Wall (M-30 grade)", "Steel Reinforcement", "Earthern Fill", "Filter Media", "Geo-reinforcement", ".", ".", ".",
    "150mm Diameter", ".", ".", ".", ".", ".", "900mm Diameter", "1200mm Diameter", "1500mm Diameter", ".", ".", ".",
    "Steel 801 Service", "Steel 802 Service", "Thermoplastic road", "paint", "Electricity", "Bonded Gas", "Hot mix", "Diesel"
  ];
  const heights = [
    21, 25, 1.5, 2, 2, 2, 4, 2, 2.2, 2, 3, 1.8, 1.5, 1.5, 2.3, 2, 1.8, 1.5, 4, 1, 1, 1.2, 1, 1, 1, 2, 5, 2, 3.3, 2, 2.2, 1.8, 1.7, 1.7, 1.7,
    1.8, 2, 4.7, 2, 5, 3.7, 2.8, 3.3, 2, 11, 1, 41, 3, 3, 12, 1, 1.5, .8, .8, .8, .8, .8, .8, .8, .8, .8, .8, .8, .8, .8, .8, .8, .8, 2.5,
    1.5, .8, 1.5, .8, .8, 16.7
  ];
  names.forEach((name, i) => {
    const cx = 145 + i * 7.95;
    const h = heights[i];
    el(svg, "rect", { class: "tbar", x: cx - 2.3, y: 384 - h, width: 4.6, height: h });
    const ly = 388, lx = cx + 1.4;
    el(svg, "text", { class: "tk-cat", x: lx, y: ly, transform: `rotate(-90 ${lx} ${ly})` }, name);
  });
})();

// Chart 6: CO2e from 1m3 of concrete, one horizontal bar per grade
(function () {
  const svg = document.getElementById("chartSix");
  const axisX = 795.3, top = 184.3, step = 18.88;
  const bars = [
    [120, "462.77", "#6a8fd0", "#a9c4ec"], [116, "428.20", "#ffca33", "#ffe08a"], [112.3, "415.10", "#b4b4b4", "#d5d5d5"],
    [103, "380.69", "#f0975a", "#f7c19b"], [87, "322.83", "#7cb0dd", "#b4d3ee"], [102.7, "378.29", "#43682b", "#86a56d"],
    [85, "314.08", "#264478", "#7287ad"], [102.7, "378.39", "#997300", "#c8a94c"], [101.3, "373.09", "#636363", "#a5a5a5"],
    [83, "307.44", "#9e480e", "#c98a5c"], [95, "352.17", "#255e91", "#7399bd"], [81.3, "301.41", "#70ad47", "#a6cd8a"],
    [90.3, "334.99", "#4472c4", "#86a6de"], [79.7, "285.37", "#ffc000", "#ffd966"], [79.7, "285.02", "#a5a5a5", "#cdcdcd"],
    [68, "251.99", "#ed7d31", "#f4b183"], [65.7, "242.02", "#5b9bd5", "#a5c9e9"]
  ];
  el(svg, "path", { class: "axis-line", d: `M${axisX} 177V511.7` });
  bars.forEach(([w, label, fill, edge], i) => {
    const y = top + i * step;
    el(svg, "rect", { x: axisX, y, width: w, height: step, fill, stroke: edge, "stroke-width": 0.7 });
    el(svg, "text", { class: "tk-val", x: axisX + w + 11, y: y + 10.7 }, label);
  });
  el(svg, "text", { class: "tk", x: 788, y: 346.5 }, "1");
  [[822.3, "100.00"], [849, "200.00"], [876.3, "300.00"], [903.7, "400.00"], [931, "500.00"]].forEach(([x, t]) => {
    el(svg, "text", { class: "tk-val", x, y: 519.3 }, t);
  });
  el(svg, "text", { class: "axis-title", x: 863, y: 527.8 }, "KG CO2E/ M3");

  const legend = [
    ["M-55", "#6a8fd0"], ["M-50", "#ffca33"], ["M45", "#b4b4b4"], ["M-40 RCC &CRASH BARRIER", "#f0975a"],
    ["M-35 Pile (Fly ash)", "#7cb0dd"], ["M-35 Pile", "#43682b"], ["M-35 RCC (Fly Ash)", "#264478"], ["M-35 RCC", "#997300"],
    ["M-35 SEGMENTAL/RE wall", "#636363"], ["M-30 (Fly ash)", "#9e480e"], ["M-30", "#255e91"], ["M-25 (Fly ash)", "#70ad47"],
    ["M-25", "#4472c4"], ["M-20 KERB", "#ffc000"], ["M-20", "#a5a5a5"], ["M-15", "#ed7d31"], ["M-10", "#5b9bd5"]
  ];
  const rowY = [541.3, 550, 559, 567.7, 576.7, 585.3, 594, 603, 612];
  legend.forEach(([name, color], i) => {
    const row = Math.floor(i / 2);
    const x = i % 2 ? 866 : 803.3;
    el(svg, "rect", { x, y: rowY[row] - 1, width: 2.6, height: 2, fill: color });
    el(svg, "text", { class: "legend-text", x: x + 4, y: rowY[row] + 1.4 }, name);
  });
})();
```
